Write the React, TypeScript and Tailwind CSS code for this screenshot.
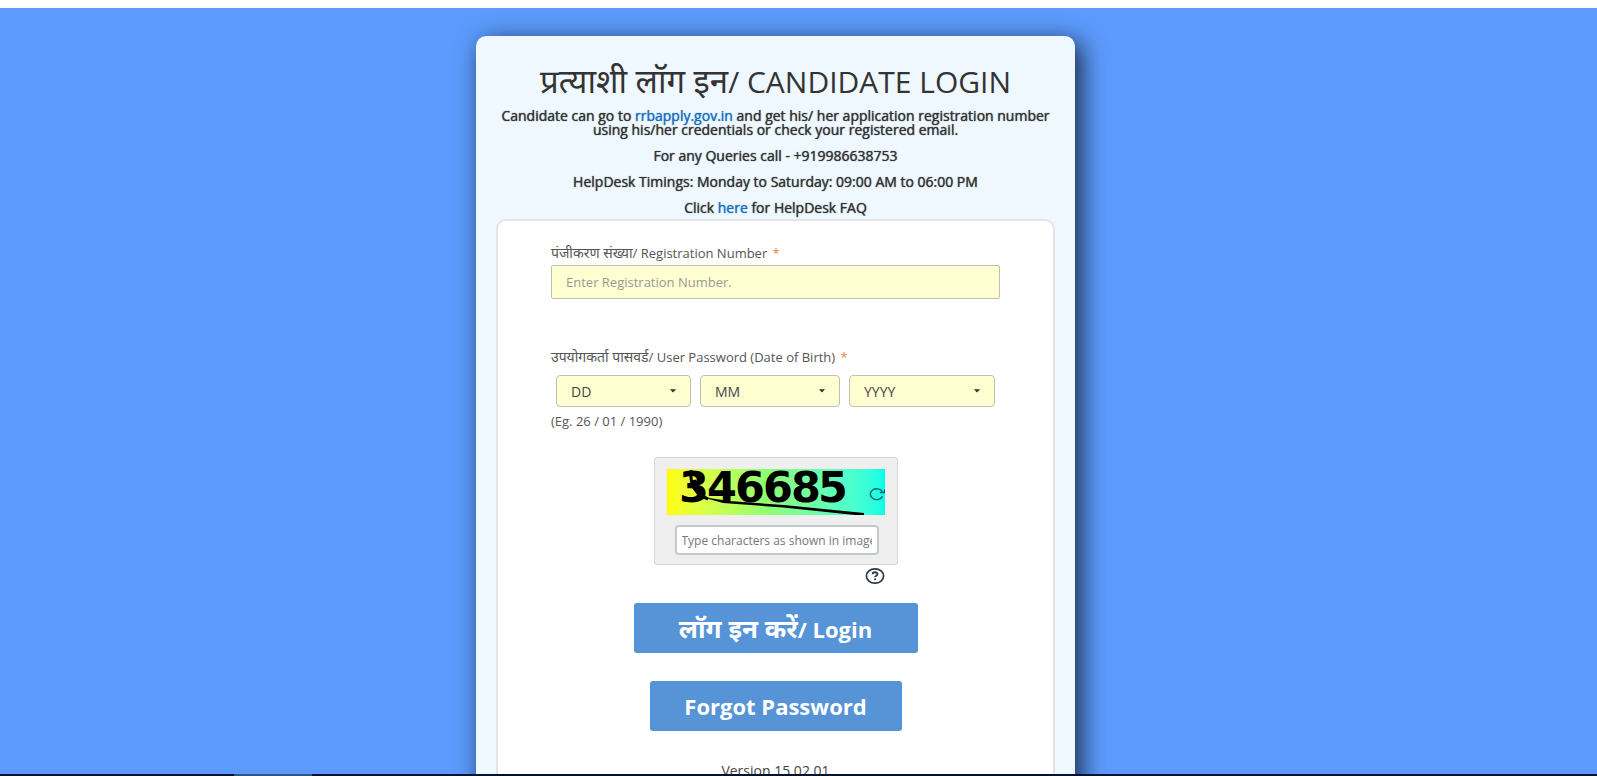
import React from "react";

const fieldBase =
  "border border-[#c0c0ae] bg-[#ffffd2] text-[#444] outline-none focus:border-[#5693d7]";

type DateSelectProps = {
  id: string;
  label: string;
  placeholder: string;
  options: string[];
  className: string;
};

const range = (from: number, to: number) =>
  Array.from({ length: to - from + 1 }, (_, i) => String(from + i).padStart(2, "0"));

const DateSelect: React.FC<DateSelectProps> = ({ id, label, placeholder, options, className }) => (
  <div className={`grid items-center ${className}`}>
    <select
      id={id}
      aria-label={label}
      defaultValue=""
      className={`${fieldBase} col-start-1 row-start-1 h-8 w-full appearance-none rounded-[4px] pl-[14px] text-[14px]`}
    >
      <option value="">{placeholder}</option>
      {options.map((o) => (
        <option key={o}>{o}</option>
      ))}
    </select>
    <svg
      viewBox="0 0 8 4"
      className="pointer-events-none col-start-1 row-start-1 mr-[14px] h-1 w-2 justify-self-end"
      aria-hidden="true"
    >
      <path d="M0.9 0.3h6.2L4 3.4z" fill="#333" />
    </svg>
  </div>
);

const Captcha: React.FC = () => (
  <div className="w-[244px] rounded-[3px] border border-[#d6d6d6] bg-[#efefef] px-3 pt-[11px] pb-[9px]">
    <div className="grid h-[46px] overflow-hidden bg-linear-to-r from-[#ffff00] via-[#90ff70] via-45% to-[#00ffe8]">
      <svg viewBox="0 0 218 46" className="col-start-1 row-start-1 h-full w-full" role="img" aria-label="Captcha 346685">
        {/* digits are set closer than their own width, so they touch */}
        <text
          x="12 40 68 96 124 151"
          y="33"
          fontFamily="DejaVu Sans"
          fontWeight="700"
          fontSize="43"
        >
          346685
        </text>
        {/* noise stroke across the digits */}
        <path
          d="M20 4.5l4-2 3 2.500M23.500 3l1 10 5-1M25 14c2 8 7 13 16 16"
          fill="none"
          stroke="#000"
          strokeWidth="3"
          strokeLinejoin="round"
        />
        <path d="M34 25l8 4 20 3 55 4 80 8v2h-9l-72-7.500-60-4.500-18-5z" fill="#000" />
      </svg>
      <button
        type="button"
        aria-label="Refresh captcha"
        className="col-start-1 row-start-1 mt-1 self-center justify-self-end"
      >
        <svg viewBox="0 0 16 14" className="h-[14px] w-4" fill="none" stroke="#145d66" strokeWidth="1.3">
          <path d="M13.600 9.400A6.400 5.400 0 1 1 13.400 4.600" />
          <path d="M10.800 5.500h4.700V2.500" />
        </svg>
      </button>
    </div>
    <input
      type="text"
      aria-label="Captcha text"
      placeholder="Type characters as shown in image"
      className="mx-2 mt-[10px] block h-[30px] w-[204px] rounded-[4px] border-2 border-[#c3c8cf] bg-white px-[5px] text-[12px] text-[#444] outline-none placeholder:text-[#777]"
    />
  </div>
);

const Required: React.FC = () => <span className="ml-0.5 text-[#f0853a]">*</span>;

const App: React.FC = () => {
  return (
    <div className="flex h-screen flex-col overflow-hidden bg-[#5c9bfd] font-['Open_Sans','Noto_Sans',sans-serif]">
      <div className="h-2 shrink-0 bg-white" />

      <main className="flex min-h-0 flex-1 items-start justify-center pt-7 pr-[46px]">
        <section className="w-[599px] max-w-full rounded-[10px] bg-[#eff7ff] px-5 pt-6 pb-10 text-[#333] shadow-[6px_6px_26px_rgba(0,0,0,0.75)]">
          <h1 className="text-center text-[30px] leading-[42px] font-normal">
            <span className="text-[33px]">प्रत्याशी लॉग इन</span>/ CANDIDATE LOGIN
          </h1>

          <div className="mt-1.5 flex flex-col gap-3 text-center text-[14px] leading-[14px] [text-shadow:0_0_1px_#333]">
            <p>
              Candidate can go to{" "}
              <a href="#apply" className="text-[#1b6fbf] [text-shadow:0_0_1px_#1b6fbf]">
                rrbapply.gov.in
              </a>{" "}
              and get his/ her application registration number
              <br />
              using his/her credentials or check your registered email.
            </p>
            <p>For any Queries call - +919986638753</p>
            <p>HelpDesk Timings: Monday to Saturday: 09:00 AM to 06:00 PM</p>
            <p>
              Click{" "}
              <a href="#faq" className="text-[#1b6fbf] [text-shadow:0_0_1px_#1b6fbf]">
                here
              </a>{" "}
              for HelpDesk FAQ
            </p>
          </div>

          <form
            className="mt-1 rounded-[10px] border-2 border-[#e1e4e8] bg-white px-[53px] pt-[22px] pb-10"
            onSubmit={(e) => e.preventDefault()}
          >
            <label htmlFor="reg" className="block text-[13px] leading-[20px] text-[#555]">
              <span className="text-[14px]">पंजीकरण संख्या</span>/ Registration Number <Required />
            </label>
            <input
              id="reg"
              type="text"
              placeholder="Enter Registration Number."
              className={`${fieldBase} mt-0.5 h-[34px] w-full rounded-[2px] px-[14px] text-[13px] placeholder:text-[#999]`}
            />

            <label htmlFor="dd" className="mt-12 block text-[13px] leading-[20px] text-[#555]">
              <span className="text-[14px]">उपयोगकर्ता पासवर्ड</span>/ User Password (Date of Birth) <Required />
            </label>
            <div className="mt-2 flex gap-[9px] px-[5px]">
              <DateSelect id="dd" label="Day" placeholder="DD" options={range(1, 31)} className="w-[135px]" />
              <DateSelect id="mm" label="Month" placeholder="MM" options={range(1, 12)} className="w-[140px]" />
              <DateSelect id="yyyy" label="Year" placeholder="YYYY" options={range(1960, 2010)} className="flex-1" />
            </div>
            <p className="mt-1 text-[13px] leading-[20px] text-[#555]">(Eg. 26 / 01 / 1990)</p>

            <div className="mt-[26px] flex flex-col items-center">
              <Captcha />
              <div className="flex w-[218px] justify-end">
                <button type="button" aria-label="Captcha help" className="mt-0.5">
                  <svg viewBox="0 0 20 18" className="h-[18px] w-5" fill="none" stroke="#2a3744">
                    <ellipse cx="10" cy="9" rx="8.6" ry="7.2" strokeWidth="1.7" />
                    <path d="M7.600 7.200c0-2.600 4.900-2.600 4.900-.1 0 1.500-2.400 1.600-2.400 3" strokeWidth="1.8" />
                    <path d="M10.100 11.400v1.700" strokeWidth="1.9" />
                  </svg>
                </button>
              </div>

              <button
                type="submit"
                className="mt-[18px] h-[50px] w-[284px] rounded-[3px] bg-[#5693d7] text-[22px] font-bold text-white"
              >
                <span className="text-[26px]">लॉग इन करें</span>/ Login
              </button>
              <button
                type="button"
                className="mt-7 h-[50px] w-[252px] rounded-[3px] bg-[#5693d7] text-[22px] font-bold text-white"
              >
                Forgot Password
              </button>
              <p className="mt-[30px] text-[14px] leading-[20px] text-[#444]">Version 15.02.01</p>
            </div>
          </form>
        </section>
      </main>

      <div className="z-10 flex h-0.5 shrink-0 bg-[#04122c]">
        <div className="ml-[234px] w-[78px] bg-[#2d5680]" />
      </div>
    </div>
  );
};

export default App;
